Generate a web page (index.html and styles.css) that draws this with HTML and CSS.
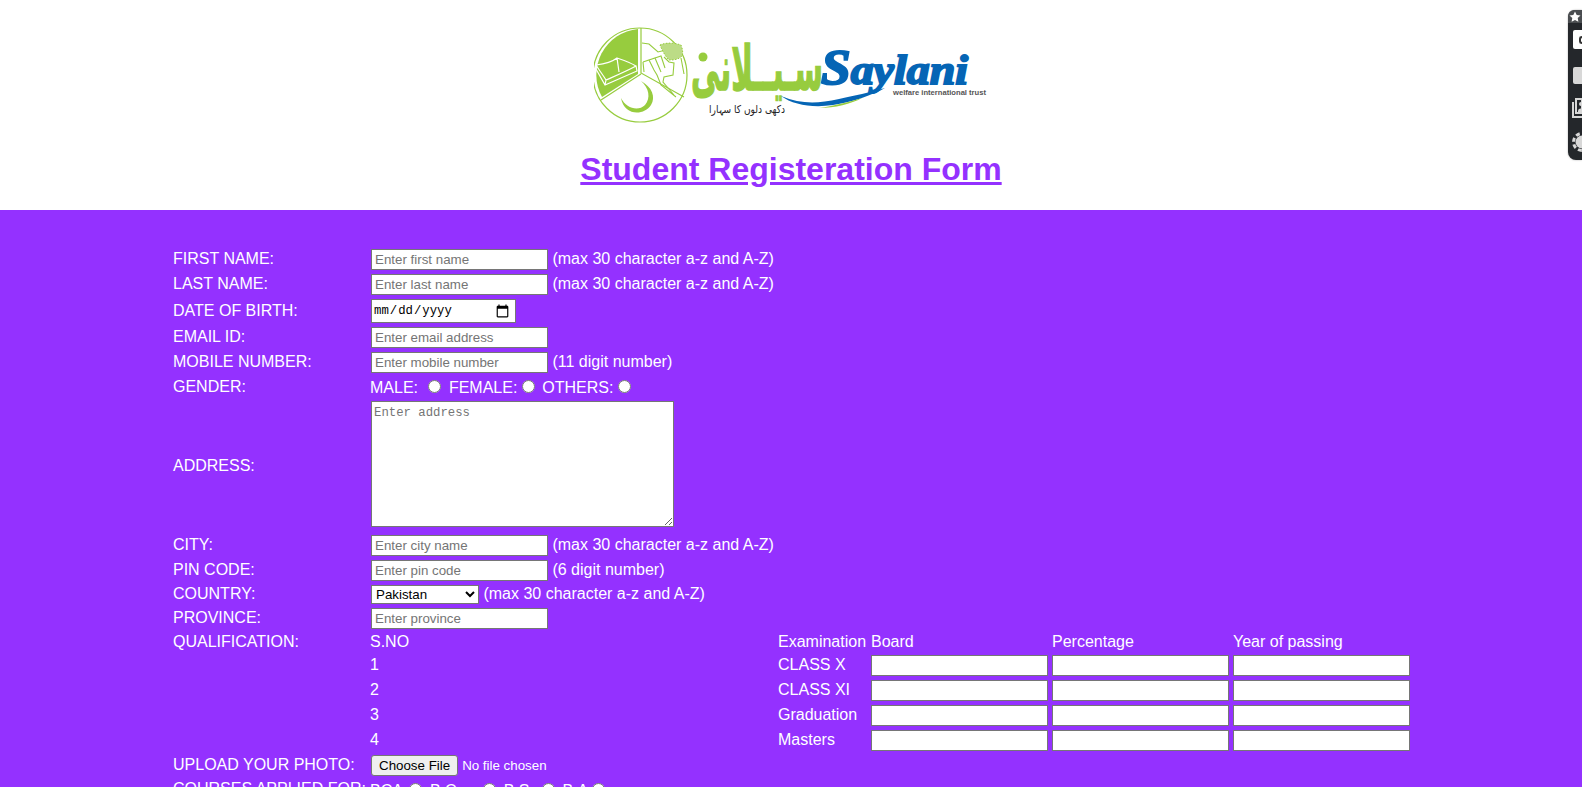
FILE: index.html
```html
<!DOCTYPE html>
<html lang="en">
<head>
<meta charset="utf-8">
<title>Student Registeration Form</title>
<link rel="stylesheet" href="styles.css">
</head>
<body>
<header class="masthead">
  <svg class="logo" viewBox="593 27 395 100" width="395" height="100" role="img" aria-label="Saylani welfare international trust">
    <circle cx="639" cy="75" r="47" fill="none" stroke="#97cc3e" stroke-width="1.2"/>
    <path d="M637 29 A46 46 0 0 0 601 97 L637 74 Z" fill="#97cc3e"/>
    <path d="M640 28 V73 L683 97 M640 74 L600 100" fill="none" stroke="#97cc3e" stroke-width="1.2"/>
    <path d="M595 65 C603 64 611 62 616 58 C622 60 630 63 635 66 C626 71 614 76 605 80 C602 75 598 70 595 65Z M595 65 L595 69 L604 85 L636 71 L635 66 M605 80 L604 85 M616 58 L618 72" fill="none" stroke="#fff" stroke-width="1.2"/>
    <path d="M641 43 L648 44 L657 52 L665 50 M663 57 L668 62 L673 63 L672 75 L663 77 L662 82 L673 95 M642 62 L648 60 L653 70 L656 75 M648 60 L654 58 L660 72 M654 58 L660 56 L664 68 M642 62 L643 72 M656 75 L660 85 L675 97 M680 58 L683 74" fill="none" stroke="#97cc3e" stroke-width="1.1"/>
    <path d="M659 45 C666 42 674 43 680 45 C682 50 682 54 681 56 C677 60 672 60 668 60 C664 56 661 50 659 45Z" fill="#bcdc86" stroke="#97cc3e" stroke-width="1" stroke-dasharray="1.5 1.5"/>
    <path d="M640 81 C651 87 655 97 650 105 C643 116 623 116 620 98 C625 108 637 112 644 105 C650 98 648 88 640 81Z" fill="#97cc3e"/>
    <text class="logo-urdu" x="690" y="90" textLength="132" lengthAdjust="spacingAndGlyphs">سـیــلانی</text>
    <circle cx="702" cy="57" r="4.5" fill="#97cc3e"/>
    <path d="M780 96 C800 104 815 104 838 99 C852 96 870 92 884 88 C870 96 850 102 832 105 C812 108 792 105 780 96Z" fill="#0565b5"/>
    <path d="M818 108 C832 106 848 102 861 98 C850 104 834 108 818 108Z" fill="#97cc3e"/>
    <text class="logo-name" x="820" y="84" textLength="147" lengthAdjust="spacingAndGlyphs"><tspan class="logo-name-cap">S</tspan>aylani</text>
    <text class="logo-tag" x="892" y="95" textLength="93" lengthAdjust="spacingAndGlyphs">welfare international trust</text>
    <text class="logo-motto" x="708" y="113" textLength="76" lengthAdjust="spacingAndGlyphs">دکھی دلوں کا سہارا</text>
  </svg>
  <h1 class="title">Student Registeration Form</h1>
</header>

<main class="panel">
  <form>
    <table class="form-table">
      <tr><td class="label">FIRST NAME:</td><td><input class="text" type="text" placeholder="Enter first name"> (max 30 character a-z and A-Z)</td></tr>
      <tr><td class="label">LAST NAME:</td><td><input class="text" type="text" placeholder="Enter last name"> (max 30 character a-z and A-Z)</td></tr>
      <tr><td class="label label-mid">DATE OF BIRTH:</td><td><input class="date" type="date"></td></tr>
      <tr><td class="label">EMAIL ID:</td><td><input class="text" type="text" placeholder="Enter email address"></td></tr>
      <tr><td class="label">MOBILE NUMBER:</td><td><input class="text" type="text" placeholder="Enter mobile number"> (11 digit number)</td></tr>
      <tr><td class="label label-mid">GENDER:</td><td class="choices">MALE: <input class="radio radio-first" type="radio" name="gender"> FEMALE: <input class="radio" type="radio" name="gender"> OTHERS: <input class="radio" type="radio" name="gender"></td></tr>
      <tr><td class="label label-mid">ADDRESS:</td><td><textarea class="address" placeholder="Enter address"></textarea></td></tr>
      <tr><td class="label">CITY:</td><td><input class="text" type="text" placeholder="Enter city name"> (max 30 character a-z and A-Z)</td></tr>
      <tr><td class="label">PIN CODE:</td><td><input class="text" type="text" placeholder="Enter pin code"> (6 digit number)</td></tr>
      <tr><td class="label">COUNTRY:</td><td><select class="country"><option>Pakistan</option></select> (max 30 character a-z and A-Z)</td></tr>
      <tr><td class="label">PROVINCE:</td><td><input class="text" type="text" placeholder="Enter province"></td></tr>
      <tr>
        <td class="label label-top">QUALIFICATION:</td>
        <td class="nested-cell">
          <table class="qual-table">
            <tr class="q-head"><td class="q-sno">S.NO</td><td class="q-exam">Examination</td><td class="q-col">Board</td><td class="q-col">Percentage</td><td class="q-col">Year of passing</td></tr>
            <tr><td class="q-sno">1</td><td class="q-exam">CLASS X</td><td class="q-col"><input class="text" type="text"></td><td class="q-col"><input class="text" type="text"></td><td class="q-col"><input class="text" type="text"></td></tr>
            <tr><td class="q-sno">2</td><td class="q-exam">CLASS XI</td><td class="q-col"><input class="text" type="text"></td><td class="q-col"><input class="text" type="text"></td><td class="q-col"><input class="text" type="text"></td></tr>
            <tr><td class="q-sno">3</td><td class="q-exam">Graduation</td><td class="q-col"><input class="text" type="text"></td><td class="q-col"><input class="text" type="text"></td><td class="q-col"><input class="text" type="text"></td></tr>
            <tr><td class="q-sno">4</td><td class="q-exam">Masters</td><td class="q-col"><input class="text" type="text"></td><td class="q-col"><input class="text" type="text"></td><td class="q-col"><input class="text" type="text"></td></tr>
          </table>
        </td>
      </tr>
      <tr><td class="label">UPLOAD YOUR PHOTO:</td><td><input class="file" type="file"></td></tr>
      <tr><td class="label">COURSES APPLIED FOR:</td><td class="choices">BCA <input class="radio radio-course" type="radio" name="course"> B.Com <input class="radio" type="radio" name="course"> B.Sc <input class="radio" type="radio" name="course"> B.A <input class="radio" type="radio" name="course"></td></tr>
    </table>
  </form>
</main>

<aside class="ext-widget" aria-hidden="true">
  <div class="ext-tab"><svg viewBox="0 0 14 13" width="14" height="13"><path d="M7 1.5l1.7 3.4 3.8.5-2.8 2.6.7 3.7L7 10l-3.4 1.7.7-3.7L1.5 5.4l3.8-.5z" fill="#fff"/></svg></div>
  <div class="ext-camera"><span class="ext-camera-c"></span></div>
  <div class="ext-block"></div>
  <svg class="ext-icon" viewBox="0 0 10 20" width="10" height="20"><path d="M1 4v15h9M4 1h6v14H4z" fill="none" stroke="#d8d8d8" stroke-width="2"/><circle cx="9" cy="6" r="2" fill="#d8d8d8"/><path d="M6 13c0-3 4-3 4-2v3H6z" fill="#d8d8d8"/></svg>
  <svg class="ext-icon" viewBox="0 0 10 20" width="10" height="20"><circle cx="10" cy="10" r="6.5" fill="#d8d8d8"/><circle cx="10" cy="10" r="8.5" fill="none" stroke="#d8d8d8" stroke-width="3" stroke-dasharray="4 2.7"/></svg>
</aside>
</body>
</html>
```
FILE: styles.css
```css
html, body {
  margin: 0;
  padding: 0;
  background: #fff;
  overflow: hidden;
  height: 787px;
}
body {
  font-family: "Liberation Sans", Arial, sans-serif;
  font-size: 16px;
  color: #fff;
}
.masthead {
  height: 210px;
  background: #fff;
  text-align: center;
  box-sizing: border-box;
  padding-top: 27px;
}
.logo { display: block; margin: 0 auto; }
.logo-urdu { font-family: "DejaVu Sans", sans-serif; font-weight: 700; font-size: 62px; fill: #97cc3e; stroke: #97cc3e; stroke-width: 1.5; }
.logo-name { font-family: "Liberation Serif", serif; font-style: italic; font-weight: 700; font-size: 43px; fill: #0565b5; stroke: #0565b5; stroke-width: 2; }
.logo-name-cap { font-size: 50px; }
.logo-tag { font-family: "Liberation Sans", sans-serif; font-weight: 700; font-size: 7px; fill: #555; }
.logo-motto { font-family: "DejaVu Sans", sans-serif; font-size: 11px; fill: #222; }
.title {
  margin: 24px 0 0;
  font-size: 32px;
  line-height: 37px;
  font-weight: 700;
  color: #9431ff;
  text-decoration: underline;
}
.panel {
  background: #9431ff;
  padding-top: 36px;
  height: 577px;
  box-sizing: border-box;
}
.form-table {
  border-collapse: separate;
  border-spacing: 2px;
  margin-left: 170px;
}
.form-table td { padding: 1px; white-space: nowrap; }
.form-table td.label { width: 194px; padding: 0 1px 2px; }
.form-table td.label-mid { padding: 1px; }
.form-table td.label-top { vertical-align: top; padding-top: 1px; }
.form-table td.nested-cell { padding: 0; }
.form-table td.choices { padding-left: 0; }
input, select, textarea { margin: 0; }
.text {
  box-sizing: border-box;
  width: 177px;
  height: 21px;
  padding: 1px 2px 1px 3px;
  border: 1px solid #767676;
  background: #fff;
  font-family: "Liberation Sans", Arial, sans-serif;
  font-size: 13.33px;
}
.date {
  box-sizing: border-box;
  width: 145px;
  height: 24px;
  padding: 1px;
  border: 1px solid #767676;
  background: #fff;
  font-family: "Liberation Mono", monospace;
  font-size: 12.3px;
}
.date::-webkit-calendar-picker-indicator {
  width: 15px;
  height: 15px;
  padding: 0;
  margin: 0 4px 0 0;
}
.address {
  box-sizing: border-box;
  width: 303px;
  height: 126px;
  padding: 4px 2px 2px;
  border: 1px solid #767676;
  background: #fff;
  font-family: "Liberation Mono", monospace;
  font-size: 12.3px;
}
.country {
  box-sizing: border-box;
  width: 108px;
  height: 19px;
  border: 1px solid #767676;
  border-radius: 0;
  background-color: #fff;
  font-family: "Liberation Sans", Arial, sans-serif;
  font-size: 13.33px;
}
.file {
  font-family: "Liberation Sans", Arial, sans-serif;
  font-size: 13.33px;
  color: #fff;
  width: 200px;
}
.file::file-selector-button {
  font-family: inherit;
  font-size: inherit;
  background: #efefef;
  border: 1px solid #767676;
  border-radius: 3px;
  padding: 1px 7px;
  height: 21px;
  margin-right: 4px;
  color: #000;
}
.radio {
  width: 13px;
  height: 13px;
  margin: 3px 3px 0 0;
}
.radio-first { margin-left: 6px; }
.radio-course { margin-left: 3px; }
.qual-table {
  border-collapse: separate;
  border-spacing: 0 2px;
  table-layout: fixed;
  width: 1044px;
  margin-top: -1px;
  margin-bottom: -2px;
}
.qual-table td { padding: 0 0 2px; }
.qual-table .q-col { padding: 1px 0; }
.qual-table .q-head td { padding: 0 0 1px; }
.q-sno { width: 408px; box-sizing: border-box; }
.q-exam { width: 93px; }
.q-col { width: 181px; }
.ext-widget {
  position: fixed;
  top: 10px;
  right: 0;
  width: 14px;
  height: 150px;
  background: #24272b;
  border-radius: 8px 0 0 8px;
  box-shadow: 0 0 2px rgba(0,0,0,.35);
  display: flex;
  flex-direction: column;
  align-items: flex-end;
  gap: 14px;
}
.ext-tab {
  position: absolute;
  top: 0;
  right: 0;
  width: 14px;
  height: 13px;
  background: #4a4d50;
  border-radius: 6px 0 0 0;
  display: flex;
}
.ext-camera {
  margin-top: 20px;
  width: 9px;
  height: 19px;
  background: #fff;
  display: flex;
  align-items: center;
  justify-content: flex-end;
  border-radius: 2px 0 0 2px;
}
.ext-camera-c {
  width: 3px;
  height: 8px;
  border: 2px solid #333;
  border-right: 0;
  border-radius: 4px 0 0 4px;
  box-sizing: border-box;
}
.ext-block {
  margin-top: 4px;
  width: 9px;
  height: 17px;
  background: #d8d8d8;
  border-radius: 2px 0 0 2px;
}
.ext-icon { flex: none; }
```
